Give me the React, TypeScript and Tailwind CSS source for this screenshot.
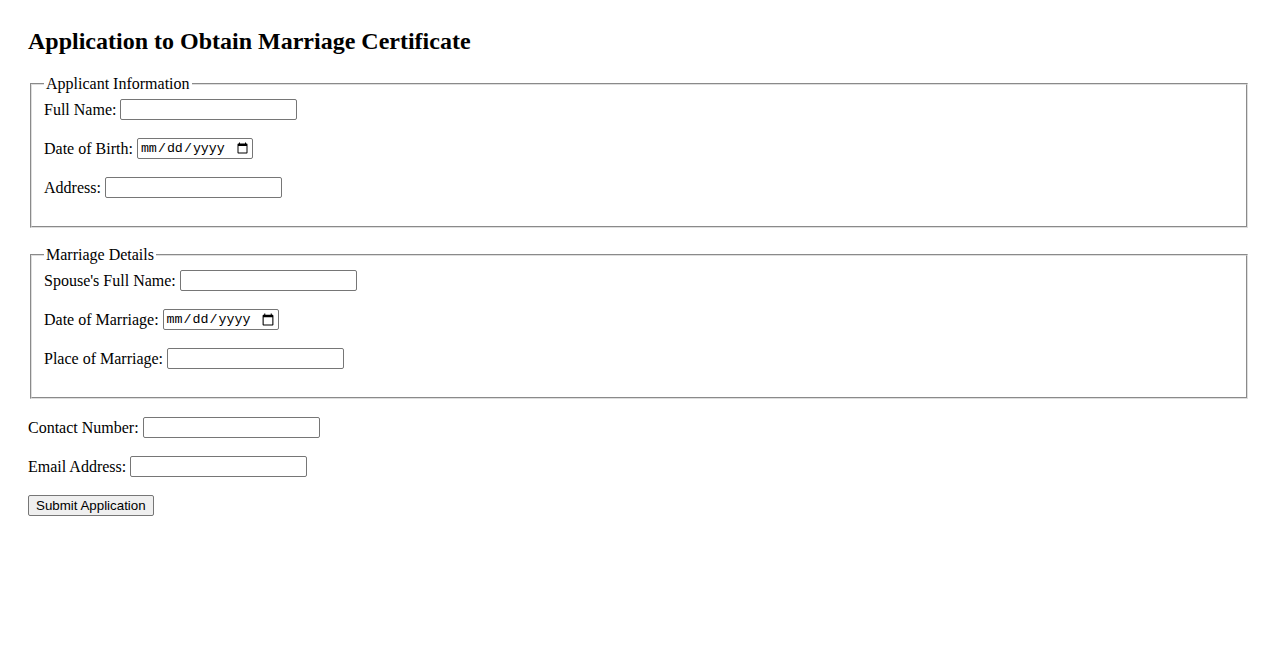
import React from 'react';

const serif = "font-['Liberation_Serif','Times_New_Roman',serif]";
const textInput =
  "h-[21px] w-[177px] rounded-[2px] border border-[#767676] bg-white px-[2px] align-middle text-[13.33px] font-['Liberation_Sans',Arial,sans-serif]";
const dateInput =
  "h-[21px] w-[116px] rounded-[2px] border border-[#767676] bg-white pl-[2px] pr-[1px] align-middle text-[13.33px] font-['Liberation_Mono','DejaVu_Sans_Mono',monospace]";

function Row({ label, type = 'text', last = false }: { label: string; type?: string; last?: boolean }) {
  return (
    <div className={`${last ? 'mb-[16px]' : 'mb-[18px]'} flex items-center gap-[4px] h-[21px]`}>
      <label>{label}</label>
      <input type={type} className={type === 'date' ? dateInput : textInput} />
    </div>
  );
}

function Group({ title, children }: { title: string; children: React.ReactNode }) {
  return (
    <fieldset className="mx-[2px] mb-[18px] border-2 border-[#dedede] [border-style:groove] px-[12px] pt-[6px] pb-[10px]">
      <legend className="px-[2px] leading-[18px]">{title}</legend>
      {children}
    </fieldset>
  );
}

export default function App() {
  return (
    <div className={`${serif} min-h-[650px] bg-white px-[28px] pt-[27px] pb-[28px] text-[16px] text-black`}>
      <h2 className="mb-[20px] text-[24px] font-bold leading-[28px]">
        Application to Obtain Marriage Certificate
      </h2>
      <form>
        <Group title="Applicant Information">
          <Row label="Full Name:" />
          <Row label="Date of Birth:" type="date" />
          <Row label="Address:" />
        </Group>
        <Group title="Marriage Details">
          <Row label="Spouse's Full Name:" />
          <Row label="Date of Marriage:" type="date" />
          <Row label="Place of Marriage:" />
        </Group>
        <Row label="Contact Number:" />
        <Row label="Email Address:" last />
        <button
          type="submit"
          className="h-[21px] rounded-[2px] border border-[#767676] bg-[#efefef] px-[7px] text-[13.33px] font-['Liberation_Sans',Arial,sans-serif]"
        >
          Submit Application
        </button>
      </form>
    </div>
  );
}
